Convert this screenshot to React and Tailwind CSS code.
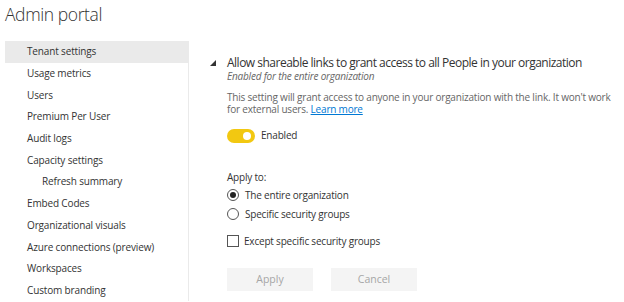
import React, { useState } from "react";

const menu = [
  { label: "Tenant settings", active: true },
  { label: "Usage metrics" },
  { label: "Users" },
  { label: "Premium Per User" },
  { label: "Audit logs" },
  { label: "Capacity settings" },
  { label: "Refresh summary", sub: true },
  { label: "Embed Codes" },
  { label: "Organizational visuals" },
  { label: "Azure connections (preview)" },
  { label: "Workspaces" },
  { label: "Custom branding" },
];

const App = () => {
  const [enabled, setEnabled] = useState(true);
  const [scope, setScope] = useState("org");
  const [except, setExcept] = useState(false);

  return (
    <div
      className="w-[624px] h-[302px] overflow-hidden bg-white text-[#333]"
      style={{ fontFamily: '"Open Sans", "Noto Sans", sans-serif' }}
    >
      {/* TITLE */}
      <div className="h-[41px] pl-[5px] pt-[1px] text-[17.5px] font-light leading-[26px] tracking-[-0.4px] text-[#333]">
        Admin portal
      </div>

      <div className="flex">
        {/* SIDEBAR */}
        <div className="ml-[5px] w-[184px] shrink-0 border-r border-[#eaeaea]">
          {menu.map((m) => (
            <div
              key={m.label}
              className={`h-[21.7px] flex items-center text-[10px] tracking-[-0.15px] text-[#333] ${
                m.sub ? "pl-[37px]" : "pl-[22px]"
              } ${m.active ? "bg-[#eaeaea]" : ""}`}
            >
              {m.label}
            </div>
          ))}
        </div>

        {/* MAIN */}
        <div className="pl-[21px] pt-[14px]">
          <div className="flex items-center">
            <svg width="6" height="6" viewBox="0 0 6 6" className="mr-[11px]">
              <polygon points="6,0 6,6 0,6" fill="#333" />
            </svg>
            <span className="whitespace-nowrap text-[12px] leading-[15px] tracking-[-0.5px] text-[#333]">
              Allow shareable links to grant access to all People in your organization
            </span>
          </div>

          <div className="pl-[17px]">
            <div className="text-[10px] italic leading-[13px] tracking-[-0.2px] text-[#666]">
              Enabled for the entire organization
            </div>
            <div className="mt-[8px] text-[10px] leading-[12px] tracking-[-0.2px] text-[#666]">
              <div className="whitespace-nowrap">
                This setting will grant access to anyone in your organization with the link. It won't work
              </div>
              <div className="whitespace-nowrap">
                for external users.{" "}
                <a className="text-[#0078d4] underline" href="#">
                  Learn more
                </a>
              </div>
            </div>

            <div className="mt-[13px] flex items-center gap-[6px]">
              <button
                onClick={() => setEnabled(!enabled)}
                className={`relative h-[14px] w-[28px] rounded-full ${enabled ? "bg-[#f2c811]" : "bg-[#ccc]"}`}
              >
                <span
                  className={`absolute top-[3px] h-[8px] w-[8px] rounded-full bg-white ${
                    enabled ? "right-[4px]" : "left-[4px]"
                  }`}
                />
              </button>
              <span className="text-[10px] tracking-[-0.2px] text-[#333]">Enabled</span>
            </div>

            <div className="mt-[27px] text-[10px] leading-[14px] tracking-[-0.2px] text-[#333]">Apply to:</div>

            <div className="mt-[4px] flex flex-col gap-[5px]">
              {[
                { id: "org", label: "The entire organization" },
                { id: "groups", label: "Specific security groups" },
              ].map((r) => (
                <div
                  key={r.id}
                  onClick={() => setScope(r.id)}
                  className="flex h-[14px] items-center gap-[6px] text-[10px] tracking-[-0.2px] text-[#333]"
                >
                  <span className="flex h-[12px] w-[12px] items-center justify-center rounded-full border border-[#555] bg-white">
                    {scope === r.id && <span className="h-[6px] w-[6px] rounded-full bg-[#222]" />}
                  </span>
                  {r.label}
                </div>
              ))}
            </div>

            <div
              onClick={() => setExcept(!except)}
              className="mt-[13px] flex h-[14px] items-center gap-[5px] text-[10px] tracking-[-0.2px] text-[#333]"
            >
              <span className="h-[12px] w-[12px] border border-[#555] bg-white" />
              Except specific security groups
            </div>

            <div className="mt-[20px] flex gap-[18px]">
              <button className="h-[23px] w-[86px] bg-[#f4f4f4] text-[10.5px] text-[#a6a6a6]">Apply</button>
              <button className="h-[23px] w-[86px] bg-[#f4f4f4] text-[10.5px] text-[#a6a6a6]">Cancel</button>
            </div>
          </div>
        </div>
      </div>
    </div>
  );
};

export default App;
